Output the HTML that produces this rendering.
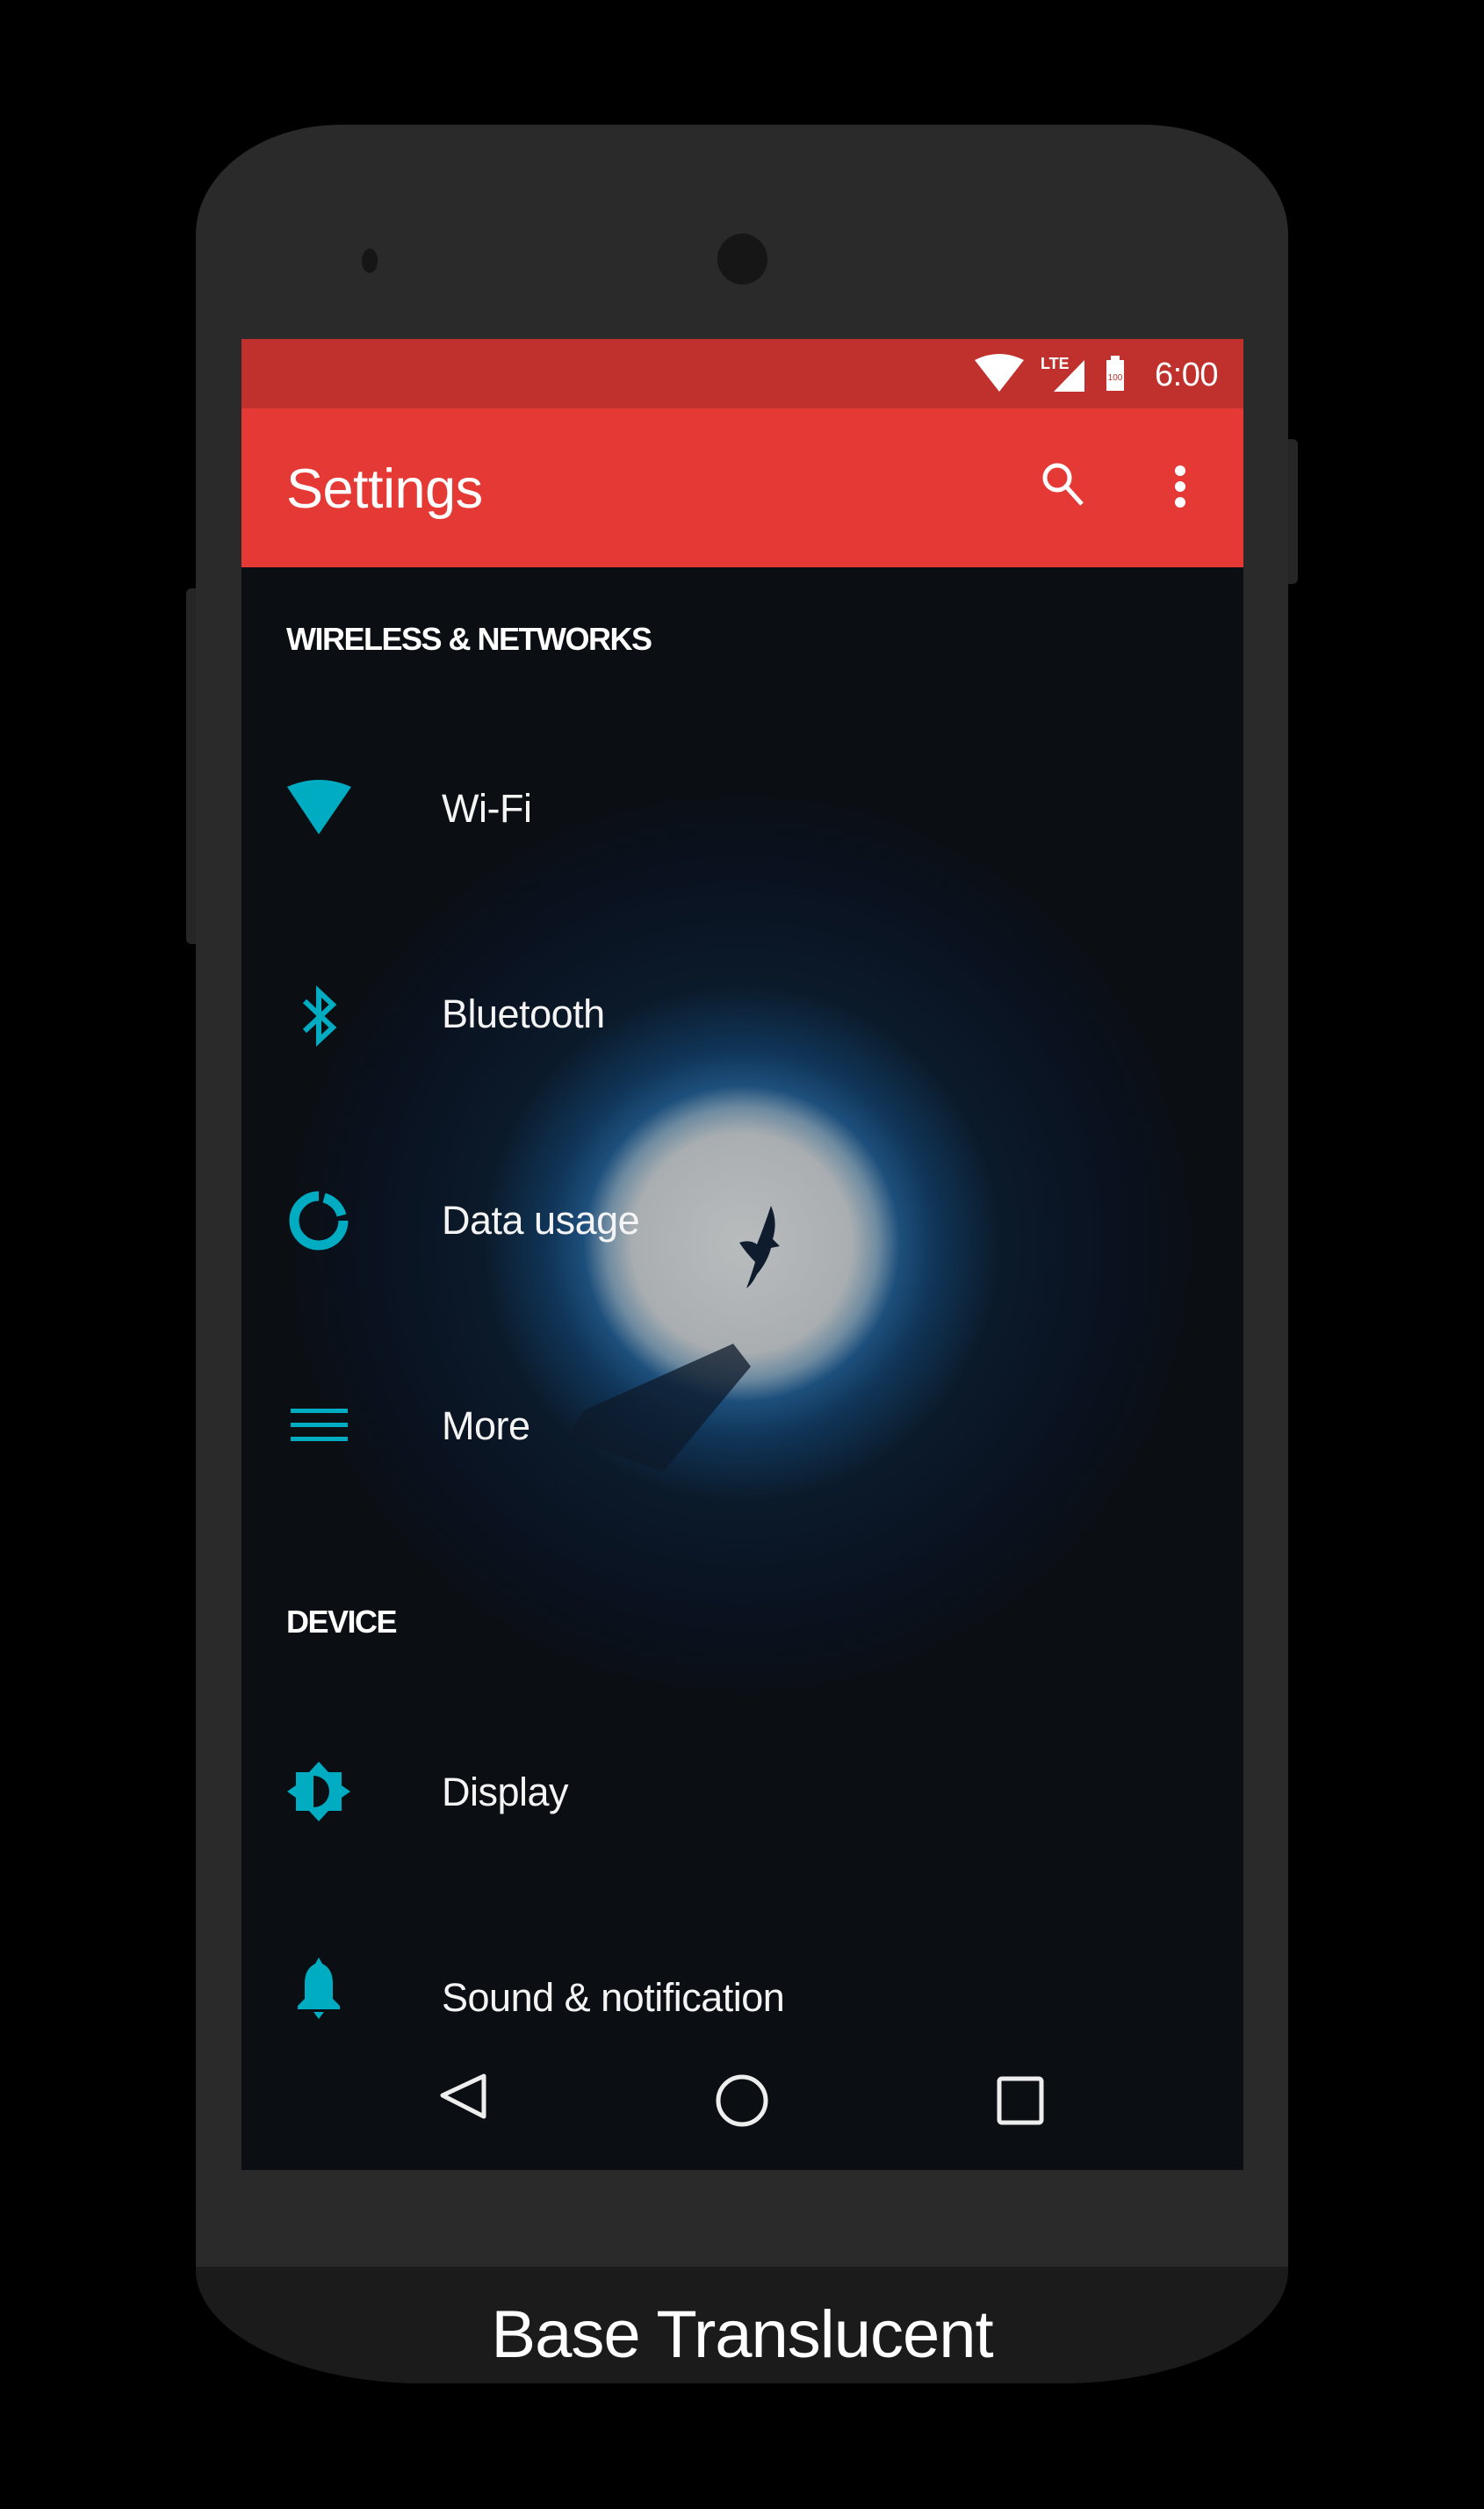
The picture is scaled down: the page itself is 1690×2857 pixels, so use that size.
<!DOCTYPE html>
<html><head><meta charset="utf-8"><style>
*{margin:0;padding:0;box-sizing:border-box}
body{width:1690px;height:2857px;background:#000;position:relative;overflow:hidden;font-family:"Liberation Sans",sans-serif;color:#fff}
.abs{position:absolute}
.body{left:223px;top:142px;width:1244px;height:2572px;background:#2a2a2a;border-radius:165px 165px 260px 260px/125px 125px 130px 130px;overflow:hidden}
.band{left:0;top:2439px;width:1244px;height:200px;background:#1b1b1b}
.screen{left:275px;top:386px;width:1141px;height:2085px;background:radial-gradient(circle at 570px 1030px,#b9bcbd 0,#a9aeb1 125px,#6d8aa0 155px,#1d4f7c 180px,#103558 220px,#0b1a2a 295px,#0a1220 420px,#0b0f14 520px)}
.sb{left:0;top:0;width:1141px;height:79px;background:#c0302c}
.tb{left:0;top:79px;width:1141px;height:181px;background:#e53935}
.t{position:absolute;font-size:45px;line-height:45px;letter-spacing:-0.5px;color:#f4f4f4;white-space:nowrap}
.h{position:absolute;font-size:36px;line-height:36px;font-weight:bold;letter-spacing:-1.5px;white-space:nowrap}
</style></head><body>
<div class="abs" style="left:1466px;top:500px;width:12px;height:165px;background:#262626;border-radius:0 6px 6px 0"></div>
<div class="abs" style="left:212px;top:670px;width:12px;height:405px;background:#262626;border-radius:6px 0 0 6px"></div>
<div class="abs body">
  <div class="abs band"></div>
</div>
<div class="abs" style="left:412px;top:283px;width:18px;height:28px;border-radius:50%;background:#161616"></div>
<div class="abs" style="left:817px;top:266px;width:57px;height:58px;border-radius:50%;background:#161616"></div>
<div class="abs screen">
  <div class="abs sb"></div>
  <div class="abs tb"></div>
  <svg class="abs" style="left:330px;top:1140px" width="280" height="160" viewBox="0 0 280 160">
    <path d="M60 80 L230 4 L250 30 L150 150 L40 110 Z" fill="#0d1a2a" opacity="0.75"/>
  </svg>
  <svg class="abs" style="left:565px;top:985px" width="60" height="100" viewBox="0 0 60 100">
    <path d="M38 2 Q46 20 40 40 L48 48 L38 50 Q34 66 22 80 Q16 92 10 96 Q16 80 20 66 Q10 56 2 44 Q14 40 22 46 Q30 26 38 2 Z" fill="#0e1c2e"/>
  </svg>
  <svg class="abs" style="left:835px;top:14px" width="260" height="60" viewBox="0 0 260 60">
    <path d="M0 10 Q28 -4 56 10 L28 46 Z" fill="#fff"/>
    <path d="M90 46 L125 46 L125 10 Z" fill="#fff"/>
    <text x="75" y="20" font-size="18" font-weight="bold" fill="#fff" font-family="Liberation Sans Narrow, Liberation Sans, sans-serif">LTE</text>
    <rect x="150" y="10" width="20" height="35" fill="#fff"/>
    <rect x="155" y="5" width="10" height="6" fill="#fff"/>
    <text x="160" y="33" font-size="10" fill="#c0302c" text-anchor="middle" font-family="Liberation Sans, sans-serif">100</text>
  </svg>
  <div class="abs" style="left:1040px;top:22px;font-size:38px;line-height:38px;letter-spacing:-0.5px">6:00</div>
  <div class="abs" style="left:51px;top:139px;font-size:63px;line-height:64px;letter-spacing:-0.5px">Settings</div>
  <svg class="abs" style="left:907px;top:136px" width="60" height="60" viewBox="0 0 60 60">
    <circle cx="22" cy="22" r="14" fill="none" stroke="#fff" stroke-width="5"/>
    <path d="M32 32 L50 52" stroke="#fff" stroke-width="5"/>
  </svg>
  <div class="abs" style="left:1063px;top:144px;width:12px;height:12px;border-radius:50%;background:#fff"></div>
  <div class="abs" style="left:1063px;top:162px;width:12px;height:12px;border-radius:50%;background:#fff"></div>
  <div class="abs" style="left:1063px;top:180px;width:12px;height:12px;border-radius:50%;background:#fff"></div>

  <div class="h" style="left:51px;top:324px">WIRELESS &amp; NETWORKS</div>
  <div class="h" style="left:51px;top:1443px">DEVICE</div>

  <div class="t" style="left:228px;top:512px">Wi-Fi</div>
  <div class="t" style="left:228px;top:746px">Bluetooth</div>
  <div class="t" style="left:228px;top:981px">Data usage</div>
  <div class="t" style="left:228px;top:1215px">More</div>
  <div class="t" style="left:228px;top:1632px">Display</div>
  <div class="t" style="left:228px;top:1866px">Sound &amp; notification</div>

  <svg class="abs" style="left:0;top:0" width="200" height="2085" viewBox="0 0 200 2085">
    <path d="M52 510 Q88 494 125 510 L88 564 Z" fill="#00acc1"/>
    <path d="M72 754 L104 784 L88 799 L88 743 L104 758 L72 788" fill="none" stroke="#00acc1" stroke-width="6"/>
    <path d="M88 976 A28 28 0 1 0 116 1004" fill="none" stroke="#00acc1" stroke-width="11"/>
    <path d="M94 978 A28 28 0 0 1 114 998" fill="none" stroke="#00acc1" stroke-width="11"/>
    <rect x="56" y="1218" width="65" height="5" fill="#00acc1"/>
    <rect x="56" y="1234" width="65" height="5" fill="#00acc1"/>
    <rect x="56" y="1250" width="65" height="5" fill="#00acc1"/>
    <path d="M88 1620 L99 1632 L114 1632 L114 1647 L124 1654 L114 1661 L114 1676 L99 1676 L88 1688 L77 1676 L62 1676 L62 1661 L52 1654 L62 1647 L62 1632 L77 1632 Z" fill="#00acc1"/>
    <path d="M82 1636 L82 1672 A18 18 0 0 0 82 1636 Z" fill="#0b0f14"/>
    <path d="M88 1843 L92 1850 Q104 1856 104 1872 L104 1890 L112 1898 L112 1902 L64 1902 L64 1898 L72 1890 L72 1872 Q72 1856 84 1850 Z" fill="#00acc1"/>
    <path d="M82 1905 L94 1905 L88 1913 Z" fill="#00acc1"/>
  </svg>

  <svg class="abs" style="left:0;top:1960px" width="1141" height="120" viewBox="0 0 1141 120">
    <path d="M276 18 L276 64 L229 40 Z" fill="none" stroke="#eee" stroke-width="5" stroke-linejoin="round"/>
    <circle cx="570" cy="46" r="27" fill="none" stroke="#eee" stroke-width="5"/>
    <rect x="863" y="21" width="48" height="50" rx="3" fill="none" stroke="#eee" stroke-width="5"/>
  </svg>
</div>
<div class="abs" style="left:0;width:1690px;top:2620px;text-align:center;font-size:76px;line-height:78px;letter-spacing:-1px">Base Translucent</div>
</body></html>
